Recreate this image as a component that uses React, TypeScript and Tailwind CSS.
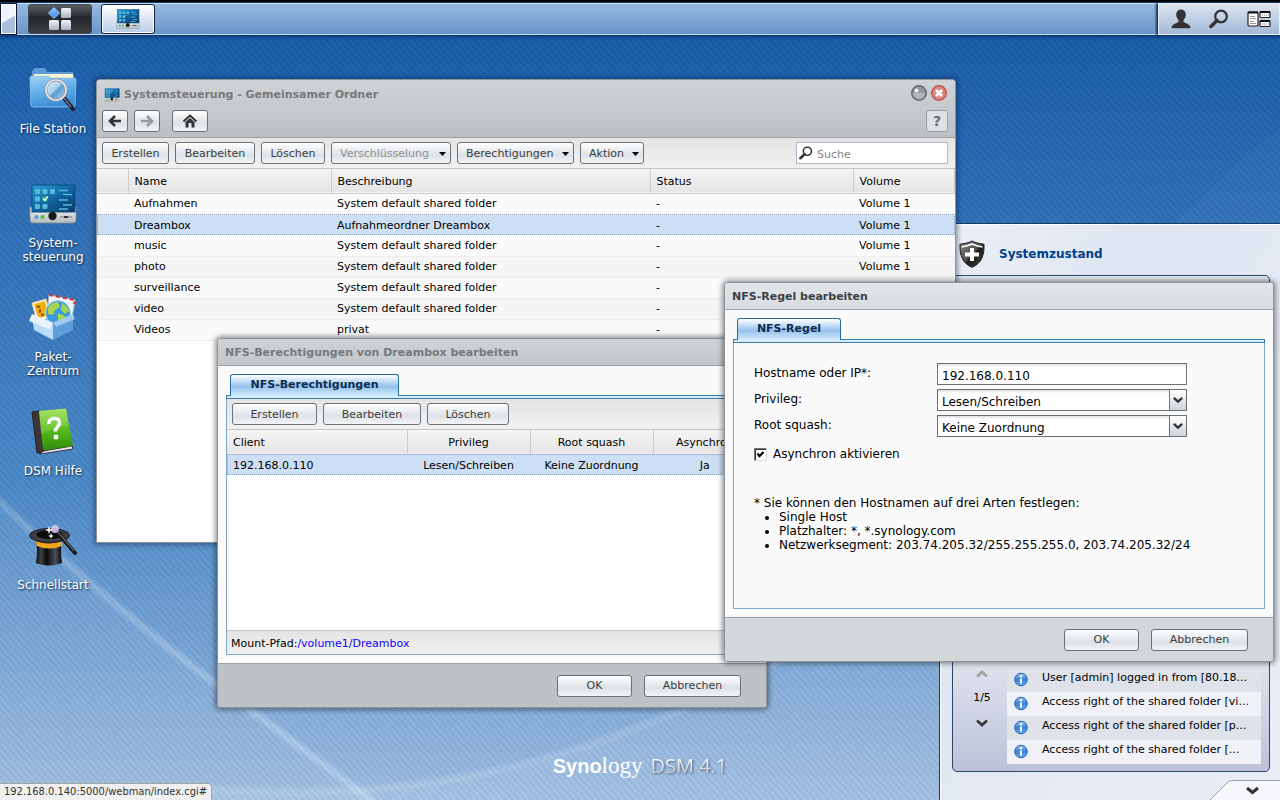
import React, { useState } from "react";
import clsx from "clsx";

const folders = [
  { name: "Aufnahmen", description: "System default shared folder", status: "-", volume: "Volume 1" },
  { name: "Dreambox", description: "Aufnahmeordner Dreambox", status: "-", volume: "Volume 1" },
  { name: "music", description: "System default shared folder", status: "-", volume: "Volume 1" },
  { name: "photo", description: "System default shared folder", status: "-", volume: "Volume 1" },
  { name: "surveillance", description: "System default shared folder", status: "-", volume: "Volume 1" },
  { name: "video", description: "System default shared folder", status: "-", volume: "Volume 1" },
  { name: "Videos", description: "privat", status: "-", volume: "Volume 1" },
];

const logs = [
  "User [admin] logged in from [80.18...",
  "Access right of the shared folder [vi...",
  "Access right of the shared folder [p...",
  "Access right of the shared folder [...",
];

const App = () => {
  return (
    <div className="relative flex min-h-screen flex-col overflow-hidden bg-linear-to-b from-[#1259a6] via-[#4a88c6] via-60% to-[#9dbce0] font-['DejaVu_Sans',Verdana,sans-serif] text-[11px] text-black">
      <Wallpaper />
      <Taskbar />

      <main className="relative flex-1">
        {/* Desktop shortcuts */}
        <nav className="flex w-[106px] flex-col pt-[31px]">
          <Shortcut icon={<FolderSearchIcon />} lines={["File Station"]} />
          <Shortcut icon={<PanelIcon className="size-12" />} lines={["System-", "steuerung"]} />
          <Shortcut icon={<PackageIcon />} lines={["Paket-", "Zentrum"]} />
          <Shortcut icon={<BookIcon />} lines={["DSM Hilfe"]} />
          <Shortcut icon={<HatIcon />} lines={["Schnellstart"]} />
        </nav>
      </main>

      <Brand />
      <HealthWidget />
      <SharedFolderWindow />
      <NfsPermissionsDialog />
      <NfsRuleDialog />

      <div className="absolute bottom-0 left-0 rounded-tr-sm border-t border-r border-[#a5a5a5] bg-[#f0f0f0] px-1 font-['DejaVu_Sans_Condensed',Tahoma,sans-serif] leading-4 text-[#333]">
        192.168.0.140:5000/webman/index.cgi#
      </div>
    </div>
  );
};

export default App;

const Wallpaper = () => (
  <div className="absolute inset-0">
    <svg className="size-full" viewBox="0 0 1280 800" preserveAspectRatio="none" aria-hidden="true">
      <defs>
        <linearGradient id="ray" x1="0" y1="0" x2="1" y2="1">
          <stop offset="0" stopColor="#fff" stopOpacity="0.22" />
          <stop offset="1" stopColor="#cfeaff" stopOpacity="0.5" />
        </linearGradient>
        <linearGradient id="sweep" x1="0" y1="1" x2="1" y2="0">
          <stop offset="0" stopColor="#fff" stopOpacity="0.1" />
          <stop offset="1" stopColor="#fff" stopOpacity="0.02" />
        </linearGradient>
        <filter id="soft">
          <feGaussianBlur stdDeviation="2" />
        </filter>
      </defs>
      <path d="M0 500Q110 610 250 712T372 806L0 800Z" fill="#fff" opacity="0.05" />
      <path d="M-4 498Q110 606 245 706T378 806" fill="none" stroke="url(#ray)" strokeWidth="6" filter="url(#soft)" />
      <path d="M200 790C420 806 580 760 720 694S1040 320 1290 120V820H200Z" fill="url(#sweep)" />
      <path d="M200 788C420 806 580 758 720 692S900 560 960 480" fill="none" stroke="#fff" strokeOpacity="0.2" strokeWidth="5" filter="url(#soft)" />
    </svg>
    <div className="absolute inset-0 bg-[repeating-linear-gradient(48deg,rgba(0,20,70,0.05)_0_2px,rgba(255,255,255,0.02)_2px_5px)]" />
  </div>
);

const Taskbar = () => (
  <header className="relative flex h-[35px] items-stretch border-t-2 border-black bg-[#123a6b] pt-px shadow-[0_1px_4px_rgba(0,20,60,0.8)]">
    <button
      aria-label="Desktop anzeigen"
      className="w-[17px] border border-[#0e1a33] bg-linear-150 from-[#eef3f9] from-50% to-[#a9bfdd] to-52% shadow-[inset_0_0_0_1px_#fff]"
    />
    <div className="flex flex-1 items-center gap-[9px] border-y border-[#c8dcf0] bg-linear-to-b from-[#98b9de] to-[#6896ca] pl-[11px]">
      <button
        aria-label="Hauptmenü"
        className="flex h-[30px] w-16 items-center justify-center rounded-[3px] border border-[#3c4a5c] bg-linear-to-b from-[#5b6066] via-[#24282c] via-45% to-[#3a3e43]"
      >
        <svg viewBox="0 0 26 26" className="size-[26px]">
          <defs>
            <linearGradient id="tile" x1="0" y1="0" x2="0" y2="1">
              <stop offset="0" stopColor="#f2f4f8" />
              <stop offset="1" stopColor="#aab2c2" />
            </linearGradient>
            <linearGradient id="gem" x1="0" y1="0" x2="0" y2="1">
              <stop offset="0" stopColor="#8cc4ff" />
              <stop offset="1" stopColor="#3f86e0" />
            </linearGradient>
          </defs>
          <path d="M7 1.500 12.500 7 7 12.500 1.500 7Z" fill="url(#gem)" stroke="#8cc4ff" strokeLinejoin="round" />
          <rect x="14" y="2" width="10" height="10" rx="1.500" fill="url(#tile)" />
          <rect x="2" y="14" width="10" height="10" rx="1.500" fill="url(#tile)" />
          <rect x="14" y="14" width="10" height="10" rx="1.500" fill="url(#tile)" />
        </svg>
      </button>
      <button
        aria-label="Systemsteuerung"
        className="flex h-[30px] w-[54px] items-center justify-center rounded-[3px] border border-[#10203a] bg-linear-to-b from-white to-[#b9cce6] shadow-[inset_0_0_0_1px_#fff]"
      >
        <PanelIcon className="size-6" />
      </button>
    </div>
    <div className="flex items-center gap-3.5 border border-[#eef3fa] bg-linear-to-b from-[#dde4ee] to-[#a2b9d8] px-2 shadow-[-2px_0_2px_#10305c]">
      <button aria-label="Benutzer" className="p-1">
        <svg viewBox="0 0 20 20" className="size-5">
          <path
            d="M10 .5C7 .5 5.200 2.500 5.200 5.500c0 2.500 1 4.500 2.300 5.600v1.600C6.500 14.500.8 14.500.5 18.500c0 .5.500.8 1 .8h17c.500 0 1-.3 1-.8-.3-4-6-4-7-5.800v-1.600c1.300-1.100 2.300-3.100 2.300-5.600C14.800 2.500 13 .5 10 .5Z"
            fill="#333"
          />
        </svg>
      </button>
      <button aria-label="Suchen">
        <LensIcon className="size-5" />
      </button>
      <button aria-label="Widgets" className="ml-1">
        <svg viewBox="0 0 24 18" className="h-[18px] w-6">
          <rect x="1" y="2" width="10" height="14" rx="1" fill="#fff" stroke="#222" strokeWidth="1.200" />
          <rect x="1" y="1.500" width="10" height="2" fill="#111" />
          <path d="M3 6.500h5M3 8.500h6M3 11.500h4M3 13.500h6" stroke="#999" />
          <rect x="13" y="1.500" width="10" height="6" rx="1" fill="#fff" stroke="#222" strokeWidth="1.200" />
          <rect x="13" y="1" width="10" height="2" fill="#111" />
          <path d="M15 5h7" stroke="#777" strokeDasharray="1 1" />
          <rect x="13" y="10.500" width="10" height="6" rx="1" fill="#fff" stroke="#222" strokeWidth="1.200" />
          <rect x="13" y="10" width="10" height="2" fill="#111" />
          <path d="M15 14h7" stroke="#777" strokeDasharray="1 1" />
        </svg>
      </button>
    </div>
  </header>
);

const Shortcut = ({ icon, lines }: { icon: React.ReactNode; lines: string[] }) => (
  <button className="flex h-[114px] flex-col items-center gap-2 text-xs leading-[14px] text-white [text-shadow:1px_1px_2px_#0a2340]">
    {icon}
    <span>
      {lines.map((line) => (
        <span key={line} className="block">
          {line}
        </span>
      ))}
    </span>
  </button>
);

const Brand = () => (
  <div className="absolute inset-x-0 bottom-5 flex items-baseline justify-center gap-2 text-white">
    <span className="text-[23px] leading-7">
      <span className="font-['Liberation_Sans',Arial,sans-serif] text-xl font-bold">Syno</span>
      <span className="font-['Liberation_Serif',serif]">logy</span>
    </span>
    <span className="bg-linear-to-b from-white from-30% to-[#a9a9a9] bg-clip-text font-['Open_Sans',sans-serif] text-xl leading-7 text-transparent drop-shadow-[1px_1px_1px_rgba(40,60,90,0.7)]">
      DSM 4.1
    </span>
  </div>
);

const HealthWidget = () => (
  <aside className="absolute top-[223px] right-0 bottom-0 flex w-[341px] flex-col border-t border-l border-[#123c70] bg-linear-to-br from-[#eceff6] via-[#dfe6f1] via-30% to-[#eaedf5] shadow-[inset_1px_1px_0_#fff]">
    <div className="flex h-[51px] items-center gap-3.5 pt-2 pl-[19px]">
      <svg viewBox="0 0 26 28" className="h-7 w-[26px]">
        <defs>
          <linearGradient id="shield" x1="0" y1="0" x2="1" y2="1">
            <stop offset="0" stopColor="#8b8b8b" />
            <stop offset="0.5" stopColor="#4c4c4c" />
            <stop offset="0.550" stopColor="#1d1d1d" />
            <stop offset="1" stopColor="#444" />
          </linearGradient>
        </defs>
        <path d="M13 1C9.500 2.800 5 3.800 1 4.200.5 15 3.500 23.500 13 27.300 22.500 23.500 25.500 15 25 4.200 21 3.800 16.500 2.800 13 1Z" fill="url(#shield)" stroke="#222" />
        <path d="M2.500 7C6 6.500 10 5.500 13 4c3 1.500 7 2.500 10.500 3" fill="none" stroke="#fff" strokeWidth="1.500" />
        <path d="M11 8h4v4.500h5v4h-5V21h-4v-4.500H6v-4h5Z" fill="#fff" />
      </svg>
      <h2 className="text-xs font-bold text-[#00418a]">Systemzustand</h2>
    </div>
    <div className="mx-3 mr-2.5 mb-7 flex flex-1 items-end rounded-[5px] border border-[#2f466b] bg-linear-to-b from-[#e4e8f0] from-75% to-[#bdc2da] pb-[7px]">
      <div className="flex h-[98px] w-[54px] flex-col items-center gap-3 pl-1">
        <button aria-label="Vorherige Seite" className="pt-1 text-[#a5a5a5]">
          <Chevron className="h-2 w-3 rotate-180" />
        </button>
        <span>1/5</span>
        <button aria-label="Nächste Seite" className="text-[#3a3a3a]">
          <Chevron className="h-2 w-3" />
        </button>
      </div>
      <ul className="mr-2 min-w-0 flex-1">
        {logs.map((log) => (
          <li key={log} className="flex h-6 items-center gap-3 pl-[7px] odd:bg-[#dfe2e9] even:bg-[#f0f0f7]">
            <InfoIcon />
            <span className="pb-1 whitespace-nowrap">{log}</span>
          </li>
        ))}
      </ul>
    </div>
    <button aria-label="Minimieren" className="absolute right-0 bottom-0 h-5 w-[70px]">
      <svg viewBox="0 0 70 20" className="size-full">
        <path d="M0 20 18 2Q20 .5 22 .5H71V20" fill="#f6f7fa" stroke="#9ba3b2" />
        <path d="M37 8l5.500 4.500L48 8" fill="none" stroke="#333" strokeWidth="3" />
      </svg>
    </button>
  </aside>
);

const ToolButton = ({
  children,
  className,
  menu,
  disabled,
}: {
  children: React.ReactNode;
  className: string;
  menu?: boolean;
  disabled?: boolean;
}) => (
  <button
    disabled={disabled}
    className={clsx(
      "flex h-[22px] items-center rounded-[3px] border border-[#6b7075] bg-linear-to-b from-white via-[#dde2e6] via-60% to-[#f3f5f7] pt-0.5",
      menu ? "justify-between pr-1 pl-2" : "justify-center",
      disabled ? "text-[#8d9296]" : "text-[#3a3d40]",
      className,
    )}
  >
    {children}
    {menu && (
      <svg viewBox="0 0 7 4" className="h-1 w-[7px]">
        <path d="M0 0h7L3.500 4Z" fill="#000" />
      </svg>
    )}
  </button>
);

const SharedFolderWindow = () => (
  <section className="absolute top-[79px] left-24 flex min-h-[464px] w-[860px] flex-col rounded-t-[4px] border border-[#8d9398] bg-white shadow-[0_0_5px_2px_rgba(0,20,50,0.4)]">
    <header className="h-[58px] rounded-t-[3px] border-b border-[#9da2a6] bg-linear-to-b from-[#cfd3d6] to-[#bbc0c4] px-[5px]">
      <div className="flex h-[30px] items-center gap-1 pl-0.5">
        <PanelIcon className="size-4" />
        <h1 className="flex-1 text-[11px] font-bold text-[#76797c]">Systemsteuerung - Gemeinsamer Ordner</h1>
        <div className="flex gap-1 pr-[3px] pb-1">
          <button aria-label="Minimieren">
            <svg viewBox="0 0 16 16" className="size-4">
              <circle cx="8" cy="8" r="7.300" fill="#92969a" stroke="#606468" strokeWidth="1.300" />
              <path d="M2 8a6 6 0 0 0 12 0Z" fill="#b3b7ba" />
              <circle cx="5.500" cy="5.500" r="2" fill="#fff" />
            </svg>
          </button>
          <button aria-label="Schließen">
            <svg viewBox="0 0 16 16" className="size-4">
              <circle cx="8" cy="8" r="7.300" fill="#dc8482" stroke="#bd4b4b" strokeWidth="1.300" />
              <path d="M5 5l6 6M11 5l-6 6" stroke="#fff" strokeWidth="2.800" />
            </svg>
          </button>
        </div>
      </div>
      <div className="flex items-center gap-1.5">
        <NavButton label="Zurück" className="w-[26px]">
          <path d="M8 3 3 8l5 5M3.500 8H14" stroke="#333" />
        </NavButton>
        <NavButton label="Vorwärts" className="w-[26px]">
          <path d="m8 3 5 5-5 5M12.500 8H2" stroke="#969a9d" />
        </NavButton>
        <NavButton label="Startseite" className="ml-1.5 w-9">
          <path d="M1.500 8.500 8 2.500l6.500 6" stroke="#333" strokeWidth="2" />
          <path d="M3.500 9 8 5l4.500 4v5.500h-3V10h-3v4.500h-3Z" fill="#333" stroke="none" />
        </NavButton>
        <button
          aria-label="Hilfe"
          className="mr-0.5 ml-auto h-[22px] w-[22px] rounded-[3px] border border-[#999fa4] bg-[#dde1e4] text-sm leading-5 font-bold text-[#696d70]"
        >
          ?
        </button>
      </div>
    </header>

    <div className="flex h-[31px] items-center gap-1.5 border-b border-[#c5c5c5] bg-linear-to-b from-[#e4e4e4] to-[#f1f1f1] px-[5px]">
      <ToolButton className="w-[67px]">Erstellen</ToolButton>
      <ToolButton className="w-20">Bearbeiten</ToolButton>
      <ToolButton className="w-16">Löschen</ToolButton>
      <ToolButton className="w-[120px]" menu disabled>
        Verschlüsselung
      </ToolButton>
      <ToolButton className="w-[117px]" menu>
        Berechtigungen
      </ToolButton>
      <ToolButton className="w-16" menu>
        Aktion
      </ToolButton>
      <div className="mr-0.5 ml-auto flex h-[22px] w-[152px] items-center gap-1 border border-[#b5b8c8] bg-white pl-0.5">
        <LensIcon className="size-3.5 shrink-0" />
        <input aria-label="Suche" placeholder="Suche" className="w-full min-w-0 pt-1 outline-none placeholder:text-[#858585]" />
      </div>
    </div>

    <table className="w-full table-fixed text-left">
      <thead>
        <tr className="h-6 border-b border-[#cfcfcf] bg-linear-to-b from-[#f4f4f4] to-[#e5e5e5]">
          <th className="w-[31px] border-r border-[#cdcdcd]"></th>
          <HeadCell className="w-[203px]">Name</HeadCell>
          <HeadCell className="w-[319px]">Beschreibung</HeadCell>
          <HeadCell className="w-[203px]">Status</HeadCell>
          <HeadCell>Volume</HeadCell>
        </tr>
      </thead>
      <tbody>
        {folders.map((folder) => (
          <tr
            key={folder.name}
            className={clsx(
              "h-[21px]",
              folder.name === "Dreambox"
                ? "bg-[#cddff4] outline-1 -outline-offset-1 outline-dotted outline-[#8aa0b8]"
                : "border-b border-[#ededed] odd:bg-[#fafafa] even:bg-[#f5f5f5]",
            )}
          >
            <td></td>
            <td className="px-1.5 pt-0.5">{folder.name}</td>
            <td className="px-1.5 pt-0.5">{folder.description}</td>
            <td className="px-1.5 pt-0.5">{folder.status}</td>
            <td className="px-1.5 pt-0.5">{folder.volume}</td>
          </tr>
        ))}
      </tbody>
    </table>
  </section>
);

const HeadCell = ({ children, className }: { children: React.ReactNode; className?: string }) => (
  <th className={clsx("border-r border-[#cdcdcd] px-1.5 pt-0.5 font-normal", className)}>{children}</th>
);

const NavButton = ({
  label,
  className,
  children,
}: {
  label: string;
  className?: string;
  children: React.ReactNode;
}) => (
  <button
    aria-label={label}
    className={clsx(
      "flex h-[22px] items-center justify-center rounded-[3px] border border-[#6b7075] bg-linear-to-b from-white via-[#dde2e6] via-60% to-[#f3f5f7]",
      className,
    )}
  >
    <svg viewBox="0 0 16 16" className="size-4" fill="none" strokeWidth="2.600">
      {children}
    </svg>
  </button>
);

const Dialog = ({
  title,
  tab,
  active,
  className,
  tabClassName,
  children,
}: {
  title: string;
  tab: string;
  active?: boolean;
  className: string;
  tabClassName: string;
  children: React.ReactNode;
}) => (
  <section
    className={clsx(
      "absolute w-[550px] rounded-[4px] border border-[#8d9398] bg-[#fafafa] shadow-[0_0_5px_2px_rgba(0,0,0,0.4)]",
      className,
    )}
  >
    <header
      className={clsx(
        "flex h-[27px] items-center rounded-t-[3px] border-b border-[#9da2a6] bg-linear-to-b px-[7px] pt-0.5",
        active ? "from-[#e1e6e9] to-[#d7dce0]" : "from-[#cfd3d6] to-[#c1c6ca]",
      )}
    >
      <h2 className={clsx("text-[11px] font-bold", active ? "text-[#3c3f42]" : "text-[#76797c]")}>{title}</h2>
    </header>
    <div className="px-2 pt-2 pb-2">
      <button
        className={clsx(
          "relative z-10 -mb-px ml-1 block h-[22px] rounded-t-[3px] border border-b-0 border-[#2a6b9b] bg-linear-to-b from-white via-[#95c1ec] via-55% to-[#d4edfd] text-[11px] font-bold text-[#0c2c50]",
          tabClassName,
        )}
      >
        {tab}
      </button>
      <div className="h-1 border border-[#3f7ba7] bg-[#d4edfd]" />
      <div className="border border-t-0 border-[#7ba9cd]">{children}</div>
    </div>
    <footer
      className={clsx(
        "flex h-11 items-center justify-end gap-3 rounded-b-[3px] border-t border-[#9da2a6] pr-[25px]",
        active ? "bg-[#d2d7da]" : "bg-[#bdc2c6]",
      )}
    >
      <ToolButton className="w-[75px]">OK</ToolButton>
      <ToolButton className="w-[97px]">Abbrechen</ToolButton>
    </footer>
  </section>
);

const NfsPermissionsDialog = () => (
  <Dialog
    title="NFS-Berechtigungen von Dreambox bearbeiten"
    tab="NFS-Berechtigungen"
    className="top-[338px] left-[217px]"
    tabClassName="w-[169px]"
  >
    <div className="flex h-[31px] items-center gap-1.5 border-b border-[#c5c5c5] bg-linear-to-b from-[#e4e4e4] to-[#f1f1f1] px-[5px]">
      <ToolButton className="w-[85px]">Erstellen</ToolButton>
      <ToolButton className="w-[98px]">Bearbeiten</ToolButton>
      <ToolButton className="w-[82px]">Löschen</ToolButton>
    </div>
    <div className="min-h-[200px] bg-white">
      <table className="w-full table-fixed text-center">
        <thead>
          <tr className="h-6 border-b border-[#cfcfcf] bg-linear-to-b from-[#f4f4f4] to-[#e5e5e5]">
            <HeadCell className="w-[180px] text-left">Client</HeadCell>
            <HeadCell className="w-[123px]">Privileg</HeadCell>
            <HeadCell className="w-[123px]">Root squash</HeadCell>
            <HeadCell>Asynchron</HeadCell>
          </tr>
        </thead>
        <tbody>
          <tr className="h-[21px] bg-[#cddff4] outline-1 -outline-offset-1 outline-dotted outline-[#8aa0b8]">
            <td className="px-1.5 pt-0.5 text-left">192.168.0.110</td>
            <td className="pt-0.5">Lesen/Schreiben</td>
            <td className="pt-0.5">Keine Zuordnung</td>
            <td className="pt-0.5">Ja</td>
          </tr>
        </tbody>
      </table>
    </div>
    <p className="flex h-6 items-center border-t border-[#c5c5c5] bg-linear-to-b from-[#e4e4e4] to-[#f1f1f1] px-1 pt-1">
      Mount-Pfad:<span className="text-[#1500ff]">/volume1/Dreambox</span>
    </p>
  </Dialog>
);

const NfsRuleDialog = () => {
  const [host, setHost] = useState("192.168.0.110");
  const [async, setAsync] = useState(true);

  return (
    <Dialog
      active
      title="NFS-Regel bearbeiten"
      tab="NFS-Regel"
      className="top-[282px] left-[724px]"
      tabClassName="w-[104px]"
    >
      <form className="min-h-[265px] px-5 pt-5 text-xs">
        <div className="mb-1 flex">
          <label htmlFor="host" className="w-[183px] pt-0.5">
            Hostname oder IP*:
          </label>
          <input
            id="host"
            value={host}
            onChange={(e) => setHost(e.target.value)}
            className="h-[22px] w-[250px] border border-[#6b7075] bg-white px-1 pt-1 shadow-[inset_0_3px_3px_-2px_#d0d4d8] outline-none"
          />
        </div>
        <SelectRow id="privileg" label="Privileg:" options={["Lesen/Schreiben", "Nur Lesen"]} />
        <SelectRow id="squash" label="Root squash:" options={["Keine Zuordnung", "Root zu Admin zuordnen"]} />
        <div className="mt-2 flex items-center gap-1.5 pt-px">
          <span className="relative size-[13px]">
            <input
              id="async"
              type="checkbox"
              checked={async}
              onChange={(e) => setAsync(e.target.checked)}
              className="block size-[13px] appearance-none border border-t-[#777] border-r-[#ddd] border-b-[#ddd] border-l-[#777] bg-white shadow-[inset_1px_1px_0_#333]"
            />
            {async && (
              <svg viewBox="0 0 13 13" className="pointer-events-none absolute inset-0">
                <path d="M3.500 5.500 5.500 8 9.500 4" fill="none" stroke="#000" strokeWidth="2.200" />
              </svg>
            )}
          </span>
          <label htmlFor="async">Asynchron aktivieren</label>
        </div>

        <div className="mt-[34px] leading-[14px]">
          <p>* Sie können den Hostnamen auf drei Arten festlegen:</p>
          <ul className="list-disc pl-[25px] whitespace-nowrap">
            <li>Single Host</li>
            <li>Platzhalter: *, *.synology.com</li>
            <li>Netzwerksegment: 203.74.205.32/255.255.255.0, 203.74.205.32/24</li>
          </ul>
        </div>
      </form>
    </Dialog>
  );
};

const SelectRow = ({ id, label, options }: { id: string; label: string; options: string[] }) => (
  <div className="mb-1 flex">
    <label htmlFor={id} className="w-[183px] pt-0.5">
      {label}
    </label>
    <div className="relative h-[22px] w-[250px]">
      <select
        id={id}
        className="h-[22px] w-full appearance-none border border-[#6b7075] bg-white px-1 pt-1 shadow-[inset_0_3px_3px_-2px_#d0d4d8] outline-none"
      >
        {options.map((option) => (
          <option key={option}>{option}</option>
        ))}
      </select>
      <span className="pointer-events-none absolute inset-y-0 right-0 flex w-[18px] items-center justify-center border border-[#6b7075] bg-linear-to-b from-white to-[#cfd4d8] text-[#333]">
        <Chevron className="h-2 w-2.5" />
      </span>
    </div>
  </div>
);

const Chevron = ({ className }: { className?: string }) => (
  <svg viewBox="0 0 12 8" className={className}>
    <path d="M1 1.500 6 6l5-4.500" fill="none" stroke="currentColor" strokeWidth="2.800" />
  </svg>
);

const LensIcon = ({ className }: { className?: string }) => (
  <svg viewBox="0 0 20 20" className={className} fill="none" stroke="#333">
    <circle cx="12" cy="7.500" r="5.800" strokeWidth="2.200" />
    <path d="M8 11.500 2 17.500" strokeWidth="3.600" strokeLinecap="round" />
  </svg>
);

const InfoIcon = () => (
  <svg viewBox="0 0 16 16" className="size-4 shrink-0">
    <defs>
      <linearGradient id="info" x1="0" y1="0" x2="0" y2="1">
        <stop offset="0" stopColor="#8cc0f2" />
        <stop offset="0.500" stopColor="#3c82d6" />
        <stop offset="1" stopColor="#5cb0f5" />
      </linearGradient>
    </defs>
    <circle cx="7" cy="7.500" r="6.300" fill="url(#info)" stroke="#2e68b4" />
    <circle cx="7" cy="4.300" r="1.200" fill="#fff" />
    <path d="M7 6.500v5" stroke="#fff" strokeWidth="2" />
  </svg>
);

const PanelIcon = ({ className }: { className?: string }) => (
  <svg viewBox="0 0 48 48" className={className}>
    <defs>
      <linearGradient id="screen" x1="0" y1="0" x2="1" y2="1">
        <stop offset="0" stopColor="#2b9fd6" />
        <stop offset="0.550" stopColor="#0f5f9c" />
        <stop offset="1" stopColor="#0a3a68" />
      </linearGradient>
      <linearGradient id="tray" x1="0" y1="0" x2="0" y2="1">
        <stop offset="0" stopColor="#fafafa" />
        <stop offset="1" stopColor="#b5b9be" />
      </linearGradient>
    </defs>
    <path d="M1 27h46v13q0 3-3 3H4q-3 0-3-3Z" fill="url(#tray)" stroke="#7d8894" strokeWidth="0.800" />
    <rect x="3" y="5" width="43" height="27" fill="url(#screen)" stroke="#0d4d83" />
    <g fill="#55b9dc">
      <rect x="6" y="9" width="5" height="5" rx="1" />
      <rect x="13.500" y="9" width="5" height="5" rx="1" />
      <rect x="21" y="9" width="5" height="5" rx="1" />
      <rect x="6" y="16.500" width="5" height="5" rx="1" />
      <rect x="21" y="16.500" width="5" height="5" rx="1" fill="#1c6494" />
      <rect x="6" y="24" width="5" height="5" rx="1" />
      <rect x="13.500" y="24" width="5" height="5" rx="1" />
    </g>
    <rect x="13.500" y="16.500" width="5" height="5" rx="1" fill="#2a7" />
    <path d="m14 18.500 1.800 2 3-4" fill="none" stroke="#fff" strokeWidth="1.300" />
    <path d="M30 10.500h9M34 14.500h9M30 20h9M34 25h9M30 29h9" stroke="#55b9dc" strokeWidth="1.600" />
    <circle cx="7.500" cy="37" r="2" fill="#35a8e8" />
    <circle cx="13.500" cy="37" r="2" fill="#4fbf2c" />
    <circle cx="23.500" cy="36" r="4.200" fill="#1c1c1c" />
    <path d="M31 37h12" stroke="#8a8f94" strokeWidth="1.500" />
    <path d="M35 37h4" stroke="#333" strokeWidth="2" />
  </svg>
);

const FolderSearchIcon = () => (
  <svg viewBox="0 0 48 48" className="size-12">
    <defs>
      <linearGradient id="folder" x1="0" y1="0" x2="0.300" y2="1">
        <stop offset="0" stopColor="#a6d4f6" />
        <stop offset="0.500" stopColor="#67b0ea" />
        <stop offset="1" stopColor="#3d8ed6" />
      </linearGradient>
      <linearGradient id="lens" x1="0" y1="0" x2="1" y2="1">
        <stop offset="0" stopColor="#e4f1fb" />
        <stop offset="0.450" stopColor="#a9d0ee" />
        <stop offset="0.550" stopColor="#5c9fd4" />
        <stop offset="1" stopColor="#b7dbf5" />
      </linearGradient>
    </defs>
    <path d="M3 12V5l3-3h10l2 4h26l1 6Z" fill="#5b9cd8" />
    <path d="M5 8h39v6H5Z" fill="#fff6cf" />
    <path d="M1 12q0-2 2-2h16l3 2h23q2 0 2 2l-1 25q0 2-2 2H3.500q-1.500 0-1.500-2Z" fill="url(#folder)" stroke="#8fc6f2" strokeWidth="0.800" />
    <path d="M35 32 44 43" stroke="#1f1c2c" strokeWidth="4" strokeLinecap="round" />
    <path d="M35 32 42 41" stroke="#9b8fb5" strokeWidth="1.200" />
    <circle cx="27" cy="24" r="10" fill="url(#lens)" stroke="#8d9096" strokeWidth="2.800" />
    <circle cx="27" cy="24" r="10" fill="none" stroke="#e6e6ea" strokeWidth="1.600" />
  </svg>
);

const PackageIcon = () => (
  <svg viewBox="0 0 48 48" className="size-12">
    <path d="m20 1 26 5-3 17-24-4Z" fill="#f4f6fa" stroke="#b9c2cf" />
    <path d="m20 1 26 5-1 4" fill="none" stroke="#cf3434" strokeWidth="2" strokeDasharray="4 3" />
    <path d="M3 9 17 5l5 18-14 5Z" fill="#fff" stroke="#d9c79a" />
    <path d="m5 10 11-3 4 14-11 4Z" fill="#f0b10e" />
    <path d="M8 12q4 1 3 5t5 4" stroke="#7a4c05" strokeWidth="2" fill="none" strokeDasharray="3 2" />
    <circle cx="29" cy="19" r="12.500" fill="#3c9be0" stroke="#bfe0f7" />
    <path d="M19 14q3-6 10-6l2 5-5 3-2 5-5-1Zm14-5q6 3 7 8l-4 3-4-4Zm-4 10 7 3-1 6-6 1Z" fill="#a8d651" />
    <path d="M3 22 24 30V46L5 36Z" fill="#b9dcf7" />
    <path d="M24 30 44 21V36L24 46Z" fill="#5f9cd8" />
    <path d="m3 20 21 8.500-3 7L0 27Z" fill="#e6f3fd" />
    <path d="m24 28.500 20-8.500 2 5-19 8Z" fill="#9ecaf0" />
  </svg>
);

const BookIcon = () => (
  <svg viewBox="0 0 48 48" className="size-12">
    <defs>
      <linearGradient id="cover" x1="0" y1="0" x2="0" y2="1">
        <stop offset="0" stopColor="#9be04f" />
        <stop offset="0.500" stopColor="#56bd1c" />
        <stop offset="1" stopColor="#2f8a08" />
      </linearGradient>
    </defs>
    <path d="m9 44 34-6 1 3-33 5Z" fill="#eee" stroke="#38304a" />
    <path d="m3 4 8-1 5 39-5 3.500-3-1Z" fill="#3f3434" stroke="#241d1d" />
    <path d="M10 3 37 .5 44 38 14 42.500Z" fill="url(#cover)" />
    <path d="M10 3 37 .5 40 17Q28 19 12 26Z" fill="#fff" opacity="0.120" />
    <path d="M20 16q-.5-5 5-5.500t5.500 4.500c0 4-4.500 4-4.200 8.500" fill="none" stroke="#fff" strokeWidth="3.600" />
    <circle cx="27" cy="29" r="2.500" fill="#fff" />
  </svg>
);

const HatIcon = () => (
  <svg viewBox="0 0 48 48" className="size-12">
    <defs>
      <linearGradient id="hat" x1="0" y1="0" x2="1" y2="0">
        <stop offset="0" stopColor="#0c0d10" />
        <stop offset="0.200" stopColor="#3c4148" />
        <stop offset="0.400" stopColor="#08090b" />
        <stop offset="0.750" stopColor="#4a5058" />
        <stop offset="1" stopColor="#050506" />
      </linearGradient>
    </defs>
    <path d="M7 17h26q-2 12 0 24-13 5-26 0 2-12 0-24Z" fill="url(#hat)" />
    <path d="M7 19q13 5 26 0v5q-13 5-25 0Z" fill="#f2a51c" />
    <ellipse cx="20.500" cy="13.500" rx="20" ry="7" fill="#3b3e43" stroke="#1c1d20" />
    <ellipse cx="20.500" cy="12.500" rx="13" ry="4.500" fill="#0b0b0d" />
    <path d="m28 10 18 21" stroke="#17181b" strokeWidth="4" strokeLinecap="round" />
    <path d="m29 10 16 19" stroke="#8b9099" strokeWidth="1" />
    <circle cx="26" cy="7" r="4" fill="#dccbf5" opacity="0.850" />
    <path d="m20 4 1 3 3 1-3 1-1 3-1-3-3-1 3-1ZM22 11l.8 2.200 2.200.8-2.200.8L22 17l-.8-2.200-2.200-.8 2.200-.8Z" fill="#fff" />
  </svg>
);
